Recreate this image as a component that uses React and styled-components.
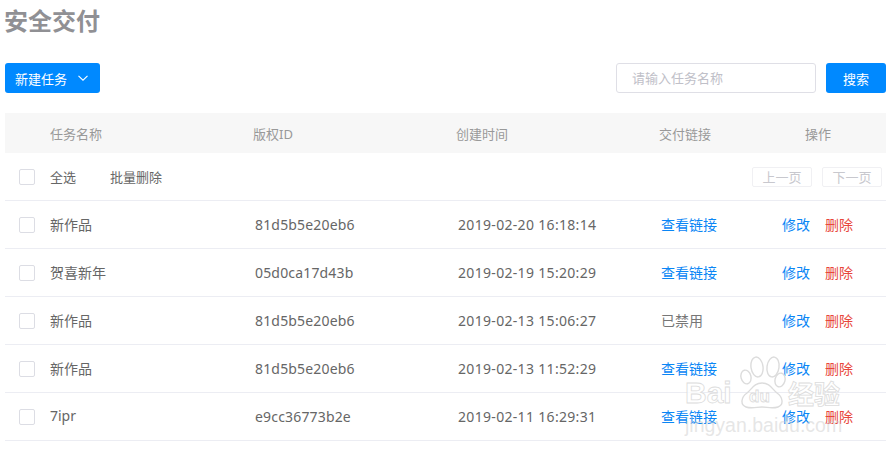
import React from "react";
import styled, { createGlobalStyle } from "styled-components";

const GlobalStyle = createGlobalStyle`
  html, body {
    margin: 0;
    padding: 0;
    background: #fff;
  }
  body {
    font-family: "Noto Sans", "Noto Sans CJK SC", sans-serif;
    color: #666;
  }
`;

const Page = styled.div`
  position: relative;
  width: 893px;
  height: 452px;
  padding: 0 7px 0 5px;
  box-sizing: border-box;
  overflow: hidden;
`;

const Title = styled.h1`
  margin: 0 0 0 -1px;
  height: 63px;
  padding-top: 4px;
  box-sizing: border-box;
  font-size: 24px;
  line-height: 34px;
  font-weight: 700;
  color: #909094;
`;

const Toolbar = styled.div`
  display: flex;
  align-items: center;
  justify-content: space-between;
  height: 30px;
  margin-bottom: 20px;
`;

const SearchBox = styled.div`
  display: flex;
  gap: 10px;
`;

const PrimaryButton = styled.button`
  display: flex;
  align-items: center;
  justify-content: center;
  gap: 11px;
  width: ${(p) => p.$width}px;
  height: 30px;
  padding: 0;
  border: none;
  border-radius: 3px;
  background: #0089ff;
  color: #fff;
  font-family: inherit;
  font-size: 13px;
`;

const ChevronIcon = styled.svg`
  width: 10px;
  height: 10px;
  margin-right: 2px;
  fill: none;
  stroke: #fff;
  stroke-width: 1.1;
`;

const SearchInput = styled.input`
  width: 200px;
  height: 30px;
  padding: 0 15px;
  box-sizing: border-box;
  border: 1px solid #dfdfe6;
  border-radius: 3px;
  font-family: inherit;
  font-size: 13px;

  &::placeholder {
    color: #c0c0c8;
    opacity: 1;
  }
`;

const HeaderRow = styled.div`
  display: grid;
  grid-template-columns: 45px 203px 203px 203px 146px 81px;
  align-items: center;
  height: 40px;
  background: #f7f7f7;
  color: #999;
  font-size: 13px;
`;

const BatchRow = styled.div`
  display: flex;
  align-items: center;
  height: 47px;
  padding: 0 4px 0 14px;
  border-bottom: 1px solid #ecedf3;
  font-size: 13px;
  color: #666;
`;

const CheckBox = styled.span`
  display: block;
  width: 14px;
  height: 14px;
  margin-left: ${(p) => p.$inset || 0}px;
  border: 1px solid #dcdde4;
  border-radius: 2px;
  background: #fff;
`;

const SelectAll = styled.span`
  margin-left: 15px;
`;

const BatchDelete = styled.span`
  margin-left: 34px;
`;

const Pager = styled.div`
  display: flex;
  gap: 10px;
  margin-left: auto;
`;

const PagerButton = styled.span`
  display: block;
  width: 60px;
  height: 20px;
  box-sizing: border-box;
  border: 1px solid #f0f0f3;
  border-radius: 2px;
  color: #c8c8ce;
  font-size: 13px;
  line-height: 18px;
  text-align: center;
`;

const Row = styled.div`
  display: grid;
  grid-template-columns: 45px 205px 203px 203px 121px 43px 1fr;
  align-items: center;
  height: 47px;
  border-bottom: 1px solid #ecedf3;
  font-size: 14px;
  color: #666;
`;

const NameText = styled.span`
  padding-bottom: 2px;
`;

const IdText = styled.span`
  letter-spacing: 0.17px;
`;

const TimeText = styled.span`
  letter-spacing: 0.32px;
`;

const LinkText = styled.span`
  padding-bottom: 2px;
  color: ${(p) => (p.$danger ? "#e8463c" : "#0a86f5")};
`;

const Disabled = styled.span`
  padding-bottom: 2px;
  color: #777;
`;

const Watermark = styled.div`
  position: absolute;
  left: 682px;
  top: 352px;
  width: 210px;
  height: 96px;
  pointer-events: none;
`;

const WatermarkLogo = styled.span`
  position: absolute;
  left: ${(p) => p.$left}px;
  top: ${(p) => p.$top}px;
  font-family: "Liberation Sans", "Noto Sans CJK SC", sans-serif;
  font-size: ${(p) => p.$size}px;
  line-height: 1;
  font-weight: 700;
  color: rgba(255, 255, 255, 0.8);
  -webkit-text-stroke: 0.8px #dcdcdc;
`;

const WatermarkUrl = styled.span`
  position: absolute;
  left: 3px;
  top: 64px;
  font-family: "Liberation Sans", sans-serif;
  font-size: 19.5px;
  line-height: 1;
  color: rgba(205, 205, 205, 0.5);
`;

const rows = [
  { name: "新作品", id: "81d5b5e20eb6", time: "2019-02-20 16:18:14" },
  { name: "贺喜新年", id: "05d0ca17d43b", time: "2019-02-19 15:20:29" },
  { name: "新作品", id: "81d5b5e20eb6", time: "2019-02-13 15:06:27", disabled: true },
  { name: "新作品", id: "81d5b5e20eb6", time: "2019-02-13 11:52:29" },
  { name: "7ipr", id: "e9cc36773b2e", time: "2019-02-11 16:29:31" },
];

const Chevron = () => (
  <ChevronIcon viewBox="0 0 10 10">
    <path d="M.5 2.8 5 7.2l4.5-4.4" />
  </ChevronIcon>
);

const Paw = () => (
  <svg width="210" height="96" viewBox="0 0 210 96" fill="none" stroke="#dcdcdc" strokeWidth="1.4" style={{ position: "absolute", left: 0, top: 0 }}>
    <ellipse cx="64" cy="25" rx="5" ry="7" transform="rotate(-15 64 25)" />
    <ellipse cx="75" cy="15" rx="6" ry="10" transform="rotate(-8 75 15)" />
    <ellipse cx="91" cy="15" rx="6" ry="10" transform="rotate(8 91 15)" />
    <ellipse cx="98" cy="28" rx="5" ry="7" transform="rotate(15 98 28)" />
    <path d="M80 31c8 0 10 6 15 10 6 4 7 12 1 14-6 2-11 0-16 0s-10 2-16 0c-6-2-5-10 1-14 5-4 7-10 15-10z" />
  </svg>
);

const App = () => {
  return (
    <Page>
      <GlobalStyle />
      <Title>安全交付</Title>
      <Toolbar>
        <PrimaryButton $width={95}>
          新建任务 <Chevron />
        </PrimaryButton>
        <SearchBox>
          <SearchInput placeholder="请输入任务名称" readOnly />
          <PrimaryButton $width={60}>搜索</PrimaryButton>
        </SearchBox>
      </Toolbar>
      <HeaderRow>
        <span />
        <span>任务名称</span>
        <span>版权ID</span>
        <span>创建时间</span>
        <span>交付链接</span>
        <span>操作</span>
      </HeaderRow>
      <BatchRow>
        <CheckBox />
        <SelectAll>全选</SelectAll>
        <BatchDelete>批量删除</BatchDelete>
        <Pager>
          <PagerButton>上一页</PagerButton>
          <PagerButton>下一页</PagerButton>
        </Pager>
      </BatchRow>
      {rows.map((row) => (
        <Row key={row.time}>
          <CheckBox $inset={14} />
          <NameText>{row.name}</NameText>
          <IdText>{row.id}</IdText>
          <TimeText>{row.time}</TimeText>
          {row.disabled ? <Disabled>已禁用</Disabled> : <LinkText>查看链接</LinkText>}
          <LinkText>修改</LinkText>
          <LinkText $danger>删除</LinkText>
        </Row>
      ))}
      <Watermark>
        <Paw />
        <WatermarkLogo $left={3} $top={26} $size={30}>Bai</WatermarkLogo>
        <WatermarkLogo $left={67} $top={36} $size={17}>du</WatermarkLogo>
        <WatermarkLogo $left={106} $top={30} $size={26}>经验</WatermarkLogo>
        <WatermarkUrl>jingyan.baidu.com</WatermarkUrl>
      </Watermark>
    </Page>
  );
};

export default App;
